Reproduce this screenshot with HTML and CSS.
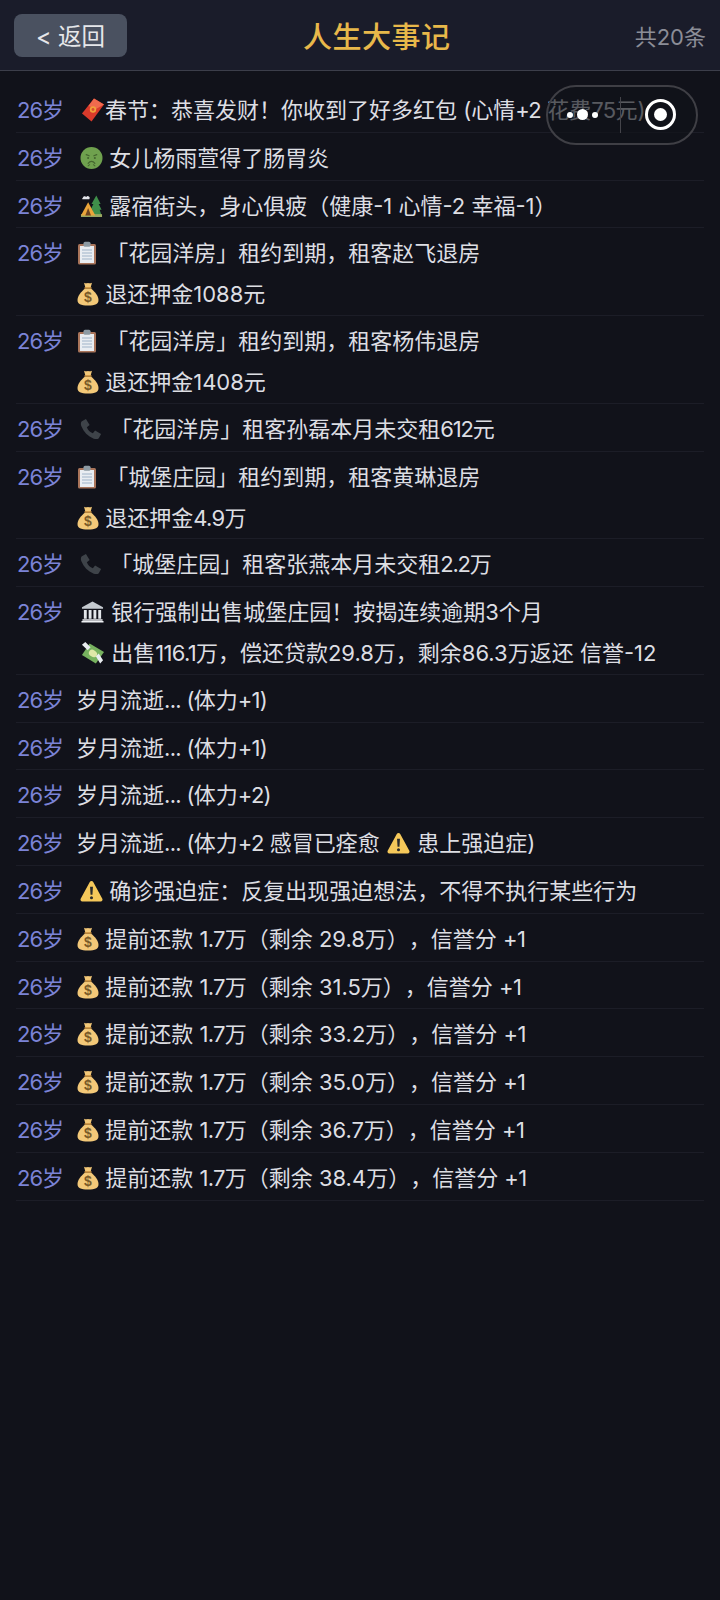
FILE: index.html
```html
<!DOCTYPE html>
<html lang="zh-CN">
<head>
<meta charset="utf-8">
<title>人生大事记</title>
<link rel="stylesheet" href="styles.css">
</head>
<body>
<svg class="defs" width="0" height="0" aria-hidden="true">
  <defs>
    <symbol id="e-red" viewBox="0 0 22 23">
      <path fill="#d93a2b" d="M12 0 22 6 9.500 23 0 15z"/>
      <path fill="#ef6a4e" d="M12 0 22 6 14 10.500 6.500 7.500z"/>
      <circle cx="11" cy="11" r="3.200" fill="#f0a03a"/>
      <circle cx="11" cy="11" r="1.400" fill="#d8502c"/>
    </symbol>
    <symbol id="e-sick" viewBox="0 0 24 24">
      <circle cx="12" cy="12" r="11.500" fill="#6fa14e"/>
      <path fill="none" stroke="#44662f" stroke-width="1.300" stroke-linecap="round" d="M6.500 8.500l3 1.200M17.500 8.500l-3 1.200M8.500 17.500c2-2.500 5-2.500 7 0"/>
      <circle cx="8.500" cy="12" r="1.100" fill="#44662f"/>
      <circle cx="15.500" cy="12" r="1.100" fill="#44662f"/>
      <path fill="none" stroke="#44662f" stroke-width="1.100" stroke-linecap="round" d="M10 19l-1.500 1.200M14 19l1.500 1.200"/>
    </symbol>
    <symbol id="e-tent" viewBox="0 0 24 24">
      <path fill="#3f8f4a" d="M17 1 21.500 10h-2l3 6h-2l2 6H11l2-6h-2l3-6h-2z"/>
      <path fill="#9aa862" d="M1 20.500h22V23.500H1z"/>
      <path fill="#eba53a" d="M8.500 8 16 22H1z"/>
      <path fill="#6e4420" d="M8.500 14 11.500 22h-6z"/>
      <path fill="#e3e5ea" d="M3 3.500a2 2 0 0 1 3.500-1 2 2 0 0 1 3.200 2.500H2.500A1.100 1.100 0 0 1 3 3.500z"/>
    </symbol>
    <symbol id="e-clip" viewBox="0 0 20 24">
      <rect x="1" y="3" width="18" height="20.500" rx="1.500" fill="#a9745a"/>
      <rect x="3" y="5" width="14" height="17" fill="#e9edf2"/>
      <rect x="6.500" y=".8" width="7" height="5" rx="1.500" fill="#8d9aa3"/>
      <path stroke="#9fb3c8" stroke-width="1.100" d="M5 9h10M5 12h10M5 15h10M5 18h10"/>
    </symbol>
    <symbol id="e-bag" viewBox="0 0 22 24">
      <path fill="#f3c878" d="M7 .8c2 1 3 .2 4 .2s2 .8 4-.2l-1.500 5.200h-5z"/>
      <path fill="#f3c878" d="M8 6.500h6C18 10 21.500 14 21.500 18c0 4-3 5.500-10.500 5.500S.5 22 .5 18C.5 14 4 10 8 6.500z"/>
      <path fill="#c98e3c" d="M7.500 5.200h7v1.500h-7z"/>
      <text class="dollar" x="11" y="20" text-anchor="middle">$</text>
    </symbol>
    <symbol id="e-phone" viewBox="0 0 24 24">
      <path fill="#3e4349" d="M2 3.500 6.500 1l4 6.500-3 2.500c1 3 3.500 5.500 6.500 6.500l2.500-3 6.500 4-2.500 4.500c-1 1-3 1.500-5.500.500C8.500 20 4 15.500 1.500 9 .5 6.500 1 4.500 2 3.500z"/>
    </symbol>
    <symbol id="e-bank" viewBox="0 0 24 24">
      <path fill="#c5cad0" d="M12 1 23 7v1.500H1V7z"/>
      <path fill="#e3e6ea" d="M3 10h3v9H3zM8 10h3v9H8zM13 10h3v9h-3zM18 10h3v9h-3z"/>
      <path fill="#eef0f3" d="M1.500 19.500h21V21h-21zM.5 21.500h23V23H.5z"/>
    </symbol>
    <symbol id="e-cash" viewBox="0 0 24 24">
      <path fill="#77b25f" d="M9 2 24 11 15.500 23 1 14z"/>
      <ellipse cx="12.500" cy="12.500" rx="4.500" ry="3.500" fill="#dfe8a8" transform="rotate(32 12.500 12.500)"/>
      <path fill="#e9edf0" d="M1 3.500 4.500.5 10 6 7 9zM15.500 15.500l3-3 4.500 7-3 3.500z"/>
    </symbol>
    <symbol id="e-warn" viewBox="0 0 24 24">
      <path fill="#f5c85a" d="M12 1.500c.8 0 1.400.4 1.800 1.100l9.500 17.600c.7 1.300-.2 2.800-1.700 2.800H2.400c-1.500 0-2.400-1.500-1.700-2.800l9.500-17.600c.4-.7 1-1.100 1.800-1.100z"/>
      <path fill="#2b2b2b" d="M10.500 7.500h3l-.5 8.500h-2z"/>
      <circle cx="12" cy="19" r="1.600" fill="#2b2b2b"/>
    </symbol>
  </defs>
</svg>

<header class="topbar">
  <button class="back">&lt; 返回</button>
  <h1 class="title">人生大事记</h1>
  <span class="count">共20条</span>
</header>

<div class="capsule" aria-hidden="true">
  <div class="dots"><i class="dot"></i><i class="dot dot-big"></i><i class="dot"></i></div>
  <i class="divider"></i>
  <div class="target"><i class="target-core"></i></div>
</div>

<main class="list">
  <div class="row"><span class="age">26岁</span><div class="body"><div class="line"><svg class="em em-red"><use href="#e-red"/></svg>春节：恭喜发财！你收到了好多红包 (心情<span class="t">+2</span> 花费<span class="t">75</span>元)</div></div></div>
  <div class="row"><span class="age">26岁</span><div class="body"><div class="line"><svg class="em em-sick"><use href="#e-sick"/></svg> 女儿杨雨萱得了肠胃炎</div></div></div>
  <div class="row"><span class="age">26岁</span><div class="body"><div class="line"><svg class="em em-sick"><use href="#e-tent"/></svg> 露宿街头，身心俱疲（健康-1 心情-2 幸福-1）</div></div></div>
  <div class="row"><span class="age">26岁</span><div class="body"><div class="line"><svg class="em em-clip"><use href="#e-clip"/></svg> 「花园洋房」租约到期，租客赵飞退房</div><div class="line"><svg class="em em-bag"><use href="#e-bag"/></svg> 退还押金1088元</div></div></div>
  <div class="row"><span class="age">26岁</span><div class="body"><div class="line"><svg class="em em-clip"><use href="#e-clip"/></svg> 「花园洋房」租约到期，租客杨伟退房</div><div class="line"><svg class="em em-bag"><use href="#e-bag"/></svg> 退还押金1408元</div></div></div>
  <div class="row"><span class="age">26岁</span><div class="body"><div class="line"><svg class="em em-phone"><use href="#e-phone"/></svg> 「花园洋房」租客孙磊本月未交租<span class="tt">612</span>元</div></div></div>
  <div class="row"><span class="age">26岁</span><div class="body"><div class="line"><svg class="em em-clip"><use href="#e-clip"/></svg> 「城堡庄园」租约到期，租客黄琳退房</div><div class="line"><svg class="em em-bag"><use href="#e-bag"/></svg> 退还押金<span class="t">4.9</span>万</div></div></div>
  <div class="row"><span class="age">26岁</span><div class="body"><div class="line"><svg class="em em-phone"><use href="#e-phone"/></svg> 「城堡庄园」租客张燕本月未交租<span class="tt">2.2</span>万</div></div></div>
  <div class="row"><span class="age">26岁</span><div class="body"><div class="line"><svg class="em em-bank"><use href="#e-bank"/></svg> 银行强制出售城堡庄园！按揭连续逾期3个月</div><div class="line"><svg class="em em-bank"><use href="#e-cash"/></svg> 出售<span class="t">116.1</span>万，偿还贷款29.8万，剩余86.3万返还 信誉-12</div></div></div>
  <div class="row"><span class="age">26岁</span><div class="body"><div class="line">岁月流逝<span class="t">... (</span>体力<span class="t">+1)</span></div></div></div>
  <div class="row"><span class="age">26岁</span><div class="body"><div class="line">岁月流逝<span class="t">... (</span>体力<span class="t">+1)</span></div></div></div>
  <div class="row"><span class="age">26岁</span><div class="body"><div class="line">岁月流逝<span class="t">... (</span>体力<span class="t">+2)</span></div></div></div>
  <div class="row"><span class="age">26岁</span><div class="body"><div class="line">岁月流逝<span class="t">... (</span>体力<span class="t">+2</span> 感冒已痊愈 <svg class="em em-warn-in"><use href="#e-warn"/></svg> 患上强迫症)</div></div></div>
  <div class="row"><span class="age">26岁</span><div class="body"><div class="line"><svg class="em em-warn"><use href="#e-warn"/></svg> 确诊强迫症：反复出现强迫想法，不得不执行某些行为</div></div></div>
  <div class="row"><span class="age">26岁</span><div class="body"><div class="line"><svg class="em em-bag"><use href="#e-bag"/></svg> 提前还款 <span class="t">1.7</span>万（剩余 29.8万），信誉分 <span class="t">+1</span></div></div></div>
  <div class="row"><span class="age">26岁</span><div class="body"><div class="line"><svg class="em em-bag"><use href="#e-bag"/></svg> 提前还款 <span class="t">1.7</span>万（剩余 31.5万），信誉分 <span class="t">+1</span></div></div></div>
  <div class="row"><span class="age">26岁</span><div class="body"><div class="line"><svg class="em em-bag"><use href="#e-bag"/></svg> 提前还款 <span class="t">1.7</span>万（剩余 33.2万），信誉分 <span class="t">+1</span></div></div></div>
  <div class="row"><span class="age">26岁</span><div class="body"><div class="line"><svg class="em em-bag"><use href="#e-bag"/></svg> 提前还款 <span class="t">1.7</span>万（剩余 35.0万），信誉分 <span class="t">+1</span></div></div></div>
  <div class="row"><span class="age">26岁</span><div class="body"><div class="line"><svg class="em em-bag"><use href="#e-bag"/></svg> 提前还款 <span class="t">1.7</span>万（剩余 36.7万），信誉分 <span class="t">+1</span></div></div></div>
  <div class="row"><span class="age">26岁</span><div class="body"><div class="line"><svg class="em em-bag"><use href="#e-bag"/></svg> 提前还款 <span class="t">1.7</span>万（剩余 38.4万），信誉分 <span class="t">+1</span></div></div></div>
</main>
</body>
</html>
```

FILE: styles.css
```css
* { box-sizing: border-box; }
html, body { margin: 0; padding: 0; }
body {
  position: relative;
  width: 720px;
  height: 1600px;
  overflow: hidden;
  background: #11121a;
  color: #dddee3;
  font-family: Inter, "Noto Sans CJK SC", sans-serif;
  font-size: 22px;
  text-spacing-trim: space-all;
}
.defs { position: absolute; }
.topbar {
  height: 71px;
  display: flex;
  align-items: center;
  justify-content: space-between;
  padding: 0 14px;
  background: #1a1c2a;
  border-bottom: 1px solid #3c3e4a;
}
.back {
  width: 113px;
  height: 43px;
  border: 0;
  border-radius: 8px;
  background: #4a5160;
  color: #e6e7ea;
  font: inherit;
  font-size: 23.5px;
  padding: 0;
}
.title {
  margin: 0 0 0 -8px;
  font-size: 29px;
  font-weight: 500;
  color: #e8b84a;
  letter-spacing: .5px;
}
.count { color: #8b8d97; font-size: 22px; }
.list { padding: 14px 16px 0; }
.row {
  display: flex;
  padding: 5px 0 .8px;
  border-bottom: 1px solid #1c1d27;
}
.age { width: 60px; flex: none; padding-left: 1px; color: #7b83d6; line-height: 41px; letter-spacing: -1px; }
.body { flex: 1; min-width: 0; }
.line { line-height: 41px; white-space: pre-wrap; }
.line + .line { margin-bottom: -1.1px; }
.t { letter-spacing: -.7px; }
.tt { letter-spacing: -1.2px; }
.em { display: inline-block; vertical-align: -4px; height: 24px; }
.em-red { width: 22px; margin: 0 1px 0 6px; }
.em-sick { width: 23px; margin: 0 0 0 4px; }
.em-clip { width: 20px; margin: 0 3px 0 1px; }
.em-bag { width: 22px; margin: 0 0 0 1px; }
.em-phone { width: 22px; margin: 0 2px 0 4px; }
.em-bank { width: 23px; margin: 0 1px 0 5px; }
.em-warn { width: 23px; margin: 0 0 0 4px; }
.em-warn-in { width: 23px; margin: 0 1px; }
.dollar { font: 700 14px "Liberation Sans", sans-serif; fill: #7a5a28; }
.capsule {
  position: absolute;
  left: 546px;
  top: 85px;
  width: 152px;
  height: 60px;
  border: 2px solid #3f3f45;
  border-radius: 30px;
  background: rgba(17, 18, 24, 0.65);
}
.dots { position: absolute; left: 19px; top: 22px; display: flex; align-items: center; gap: 4px; }
.dot { width: 6px; height: 6px; border-radius: 50%; background: #fff; }
.dot-big { width: 11px; height: 11px; }
.divider { position: absolute; left: 72px; top: 10px; width: 1px; height: 36px; background: #44444a; }
.target {
  position: absolute;
  left: 97px;
  top: 12px;
  width: 31px;
  height: 31px;
  border: 3px solid #fff;
  border-radius: 50%;
  display: flex;
  align-items: center;
  justify-content: center;
}
.target-core { width: 13px; height: 13px; border-radius: 50%; background: #fff; }
```
